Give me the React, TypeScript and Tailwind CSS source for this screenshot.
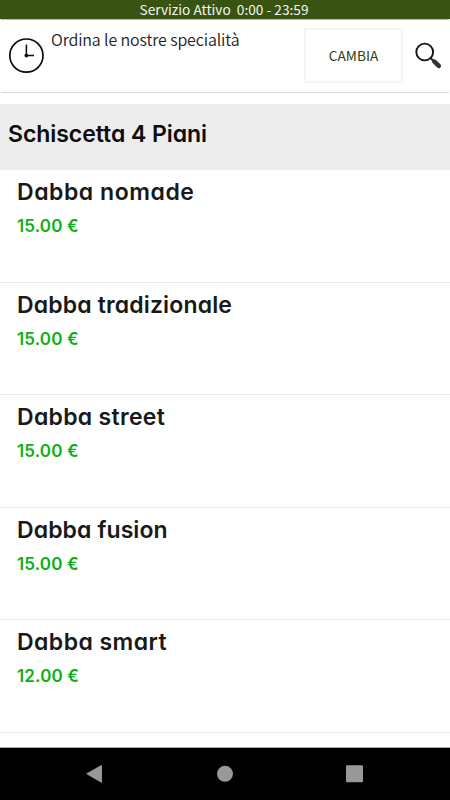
import React from 'react';

interface DishProps {
  name: string;
  price: string;
  tracking: string;
}

const dishes: DishProps[] = [
  { name: 'Dabba nomade', price: '15.00 €', tracking: 'tracking-[0.55px]' },
  { name: 'Dabba tradizionale', price: '15.00 €', tracking: 'tracking-[0.15px]' },
  { name: 'Dabba street', price: '15.00 €', tracking: 'tracking-[0.3px]' },
  { name: 'Dabba fusion', price: '15.00 €', tracking: 'tracking-[0.1px]' },
  { name: 'Dabba smart', price: '12.00 €', tracking: 'tracking-[0.45px]' },
];

const ClockIcon = () => (
  <svg className="h-9 w-9 shrink-0" viewBox="0 0 36 36" fill="none" stroke="#0a0a0a">
    <circle cx="18.4" cy="17.6" r="16.6" strokeWidth="1.7" />
    <path d="M18.4 6.6v11h7.6" strokeWidth="1.5" />
    <circle cx="18.4" cy="17.6" r="1.9" fill="#0a0a0a" stroke="none" />
  </svg>
);

const SearchIcon = () => (
  <svg className="h-7 w-7 shrink-0" viewBox="0 0 28 28" fill="none">
    <circle cx="9.7" cy="10" r="8.4" stroke="#151515" strokeWidth="1.9" />
    <path d="M15.7 16.2l3 3" stroke="#222" strokeWidth="2" />
    <path d="M19.4 19.7l4.4 4.2" stroke="#333" strokeWidth="4.6" strokeLinecap="round" />
  </svg>
);

const Dish = ({ name, price, tracking }: DishProps) => (
  <li className="h-[112.5px] border-b border-[#ebebeb] pl-[17px] pt-1.5">
    <h3 className={`text-[23px] font-semibold leading-8 text-[#181a1a] ${tracking}`}>{name}</h3>
    <p className="mt-1 text-[17px] font-semibold leading-7 tracking-[0.15px] text-[#0cb010]">{price}</p>
  </li>
);

export default function App() {
  return (
    <div className="flex h-[800px] w-[450px] flex-col overflow-hidden bg-white font-['Noto_Sans_CJK_JP',sans-serif]">
      {/* Service hours */}
      <div className="flex h-[19px] shrink-0 items-start justify-center whitespace-pre bg-[#395313] pr-[2px] text-[13.7px] leading-[19px] text-[#f2f5ee]">
        {'Servizio Attivo  0:00 - 23:59'}
      </div>

      <header className="mx-px flex h-[74px] shrink-0 border-b border-t border-b-[#d8d8d8] border-t-[#b9c1ad] pl-[7px]">
        <div className="pt-[18px]">
          <ClockIcon />
        </div>
        <p className="ml-[7px] mt-[7px] flex-1 whitespace-nowrap text-base font-[350] leading-6 tracking-[-0.13px] text-[#222]">
          Ordina le nostre specialità
        </p>
        <button className="mt-2 flex h-[55px] w-[99px] items-center justify-center border-2 border-[#f5f5f5] text-[13.7px] text-[#2a4215]">
          CAMBIA
        </button>
        <div className="ml-3 mr-1.5 pt-[22px]">
          <SearchIcon />
        </div>
      </header>

      {/* Menu */}
      <main className="mt-[11px] flex-1 overflow-hidden font-[Inter,sans-serif] [font-feature-settings:'cv11','ss03']">
        <h2 className="flex h-[66px] items-center bg-[#ededed] pb-1.5 pl-2 text-[23px] font-semibold tracking-[-0.05px] text-[#0c0c0c]">
          Schiscetta 4 Piani
        </h2>
        <ul>
          {dishes.map(dish => (
            <Dish key={dish.name} {...dish} />
          ))}
        </ul>
      </main>

      {/* System navigation */}
      <nav className="h-[53px] shrink-0 border-t border-[#aaa] bg-black">
        <svg className="h-[52px] w-[450px]" viewBox="0 0 450 52" fill="#999">
          <path d="M86 25.7L101 17.3Q102 17 102 18V34Q102 35 101 34.5Z" />
          <circle cx="225" cy="25.8" r="8" />
          <rect x="346" y="17.3" width="17" height="17" rx="1" />
        </svg>
      </nav>
    </div>
  );
}
